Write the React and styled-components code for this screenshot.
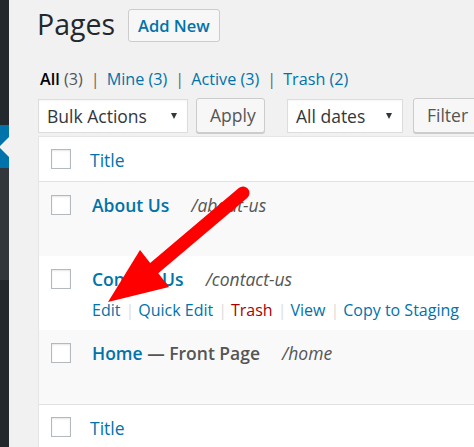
import React from 'react';
import styled, { createGlobalStyle } from 'styled-components';

/**
 * Define styles
 */

const GlobalStyle = createGlobalStyle`
  html, body {
    margin: 0;
    padding: 0;
  }
  body {
    background: #f1f1f1;
    font-family: "Open Sans", "Liberation Sans", sans-serif;
    color: #444;
    overflow: hidden;
  }
`

const Screen = styled.div`
  position: relative;
  display: flex;
  width: 474px;
  height: 447px;
  overflow: hidden;
`

const Sidebar = styled.div`
  flex: none;
  width: 9px;
  display: flex;
  flex-direction: column;
  background: #23282d;
`

const MenuBlock = styled.div`
  position: relative;
  flex: none;
  height: ${p => p.$h}px;
  background: ${p => p.$bg};

  ${p => p.$current && `
    &::after {
      content: '';
      position: absolute;
      right: 0;
      top: 50%;
      margin-top: -10px;
      border-right: 10px solid #f1f1f1;
      border-top: 10px solid transparent;
      border-bottom: 10px solid transparent;
    }
  `}
`

const Main = styled.div`
  flex: none;
  width: 620px;
  padding-left: 29px;
`

const Header = styled.div`
  display: flex;
  align-items: flex-start;
  padding-top: 3px;
`

const Title = styled.h1`
  margin: 0 0 0 -1px;
  font-size: 28.5px;
  line-height: 42px;
  font-weight: 400;
  color: #23282d;
`

const AddNew = styled.a`
  box-sizing: border-box;
  margin: 6px 0 0 13px;
  height: 33px;
  padding: 0 9px;
  border: 1px solid #ccc;
  border-radius: 3px;
  background: #f7f7f7;
  color: #0073aa;
  font-size: 16.5px;
  font-weight: 600;
  line-height: 31px;
  text-decoration: none;
`

const Views = styled.div`
  margin-top: 21px;
  padding-left: 2px;
  font-size: 16.2px;
  line-height: 26px;
  color: #666;
`

const View = styled.span`
  color: ${p => (p.$current ? '#000' : '#0073aa')};
  font-weight: ${p => (p.$current ? 600 : 400)};
`

const Count = styled.span`
  font-weight: 400;
  color: ${p => (p.$muted ? '#555' : '#0073aa')};
`

const Sep = styled.span`
  margin: 0 7px 0 8px;
`

const TableNav = styled.div`
  display: flex;
  align-items: center;
  margin-top: 6px;
`

const Select = styled.div`
  box-sizing: border-box;
  display: flex;
  align-items: center;
  justify-content: space-between;
  width: ${p => p.$w}px;
  height: 34px;
  margin-left: ${p => p.$gap || 0}px;
  padding: 0 10px 0 8px;
  border: 1px solid #ddd;
  background: #fff;
  color: #32373c;
  font-size: 17.5px;
  box-shadow: inset 0 1px 2px rgba(0, 0, 0, 0.04);
`

const Caret = styled.span`
  width: 0;
  height: 0;
  border-left: 3px solid transparent;
  border-right: 3px solid transparent;
  border-top: 6px solid #32373c;
`

const Button = styled.div`
  box-sizing: border-box;
  width: ${p => p.$w}px;
  height: 35px;
  margin-left: ${p => p.$gap}px;
  padding-left: 13px;
  border: 1px solid #ccc;
  border-radius: 3px;
  background: #f7f7f7;
  box-shadow: 0 1px 0 #ccc;
  color: #555;
  font-size: 17.5px;
  line-height: 33px;
`

const Table = styled.div`
  margin-top: 3px;
  border: 1px solid #e5e5e5;
  background: #fff;
`

const HeadRow = styled.div`
  display: flex;
  align-items: center;
  height: 44px;
  border-top: ${p => (p.$foot ? '1px solid #e1e1e1' : 'none')};
  border-bottom: ${p => (p.$foot ? 'none' : '1px solid #e1e1e1')};
`

const Row = styled.div`
  display: flex;
  align-items: flex-start;
  height: 74px;
  box-sizing: border-box;
  padding-top: 10px;
  background: ${p => (p.$alt ? '#f9f9f9' : '#fff')};
`

const CheckCell = styled.div`
  flex: none;
  width: 51px;
  padding-left: 12px;
  box-sizing: border-box;
  padding-top: ${p => (p.$head ? 0 : 3)}px;
`

const Check = styled.span`
  display: block;
  box-sizing: border-box;
  width: 20px;
  height: 20px;
  border: 1px solid #b4b9be;
  background: #fff;
  box-shadow: inset 0 1px 2px rgba(0, 0, 0, 0.1);
`

const ColTitle = styled.span`
  margin-top: 2px;
  color: #0073aa;
  font-size: 17.5px;
  line-height: 26px;
`

const TitleCell = styled.div`
  padding-left: 2px;
`

const TitleLine = styled.div`
  display: flex;
  font-size: 17.5px;
  line-height: 26px;
`

const PageLink = styled.span`
  color: #0073aa;
  font-weight: 600;
`

const State = styled.span`
  color: #555;
  font-weight: 600;
`

const Slug = styled.span`
  margin-left: 22px;
  color: #555;
  font-style: italic;
`

const Actions = styled.div`
  margin-top: 5px;
  font-size: 16px;
  line-height: 26px;
  color: #ddd;
`

const Action = styled.span`
  color: ${p => (p.$danger ? '#a00' : '#0073aa')};
`

const ActionSep = styled.span`
  margin: 0 4px 0 5px;
`

const Overlay = styled.svg`
  position: absolute;
  left: 0;
  top: 0;
  pointer-events: none;
`

/**
 * Define data
 */

const pages = [
  { title: 'About Us', slug: '/about-us' },
  { title: 'Contact Us', slug: '/contact-us', actions: true },
  { title: 'Home', state: 'Front Page', slug: '/home' },
]

const actions = ['Edit', 'Quick Edit', 'Trash', 'View', 'Copy to Staging']

/**
 * Define component
 */

function App() {
  return (
    <Screen>
      <GlobalStyle />
      <Sidebar>
        <MenuBlock $h={125} $bg="#23282d" />
        <MenuBlock $h={43} $bg="#0073aa" $current />
        <MenuBlock $h={112} $bg="#32373c" />
      </Sidebar>
      <Main>
        <Header>
          <Title>Pages</Title>
          <AddNew>Add New</AddNew>
        </Header>

        <Views>
          <View $current>All <Count $muted>(3)</Count></View>
          <Sep>|</Sep>
          <View>Mine <Count>(3)</Count></View>
          <Sep>|</Sep>
          <View>Active <Count>(3)</Count></View>
          <Sep>|</Sep>
          <View>Trash <Count>(2)</Count></View>
        </Views>

        <TableNav>
          <Select $w={150}>Bulk Actions<Caret /></Select>
          <Button $w={69} $gap={8}>Apply</Button>
          <Select $w={116} $gap={22}>All dates<Caret /></Select>
          <Button $w={74} $gap={10}>Filter</Button>
        </TableNav>

        <Table>
          <HeadRow>
            <CheckCell $head><Check /></CheckCell>
            <ColTitle>Title</ColTitle>
          </HeadRow>
          {pages.map((page, i) => (
            <Row key={page.title} $alt={i % 2 === 0}>
              <CheckCell><Check /></CheckCell>
              <TitleCell>
                <TitleLine>
                  <PageLink>{page.title}</PageLink>
                  {page.state && <State>&nbsp;— {page.state}</State>}
                  <Slug>{page.slug}</Slug>
                </TitleLine>
                {page.actions && (
                  <Actions>
                    {actions.map((a, j) => (
                      <React.Fragment key={a}>
                        {j > 0 && <ActionSep>|</ActionSep>}
                        <Action $danger={a === 'Trash'}>{a}</Action>
                      </React.Fragment>
                    ))}
                  </Actions>
                )}
              </TitleCell>
            </Row>
          ))}
          <HeadRow $foot>
            <CheckCell $head><Check /></CheckCell>
            <ColTitle>Title</ColTitle>
          </HeadRow>
        </Table>
      </Main>

      <Overlay width="474" height="447" viewBox="0 0 474 447">
        <line x1="243" y1="193" x2="152" y2="270" stroke="#f00" strokeWidth="13" strokeLinecap="round" />
        <polygon points="108,302 140,250 169,287" fill="#f00" />
      </Overlay>
    </Screen>
  );
}

/**
 * Export component
 */

export default App;
